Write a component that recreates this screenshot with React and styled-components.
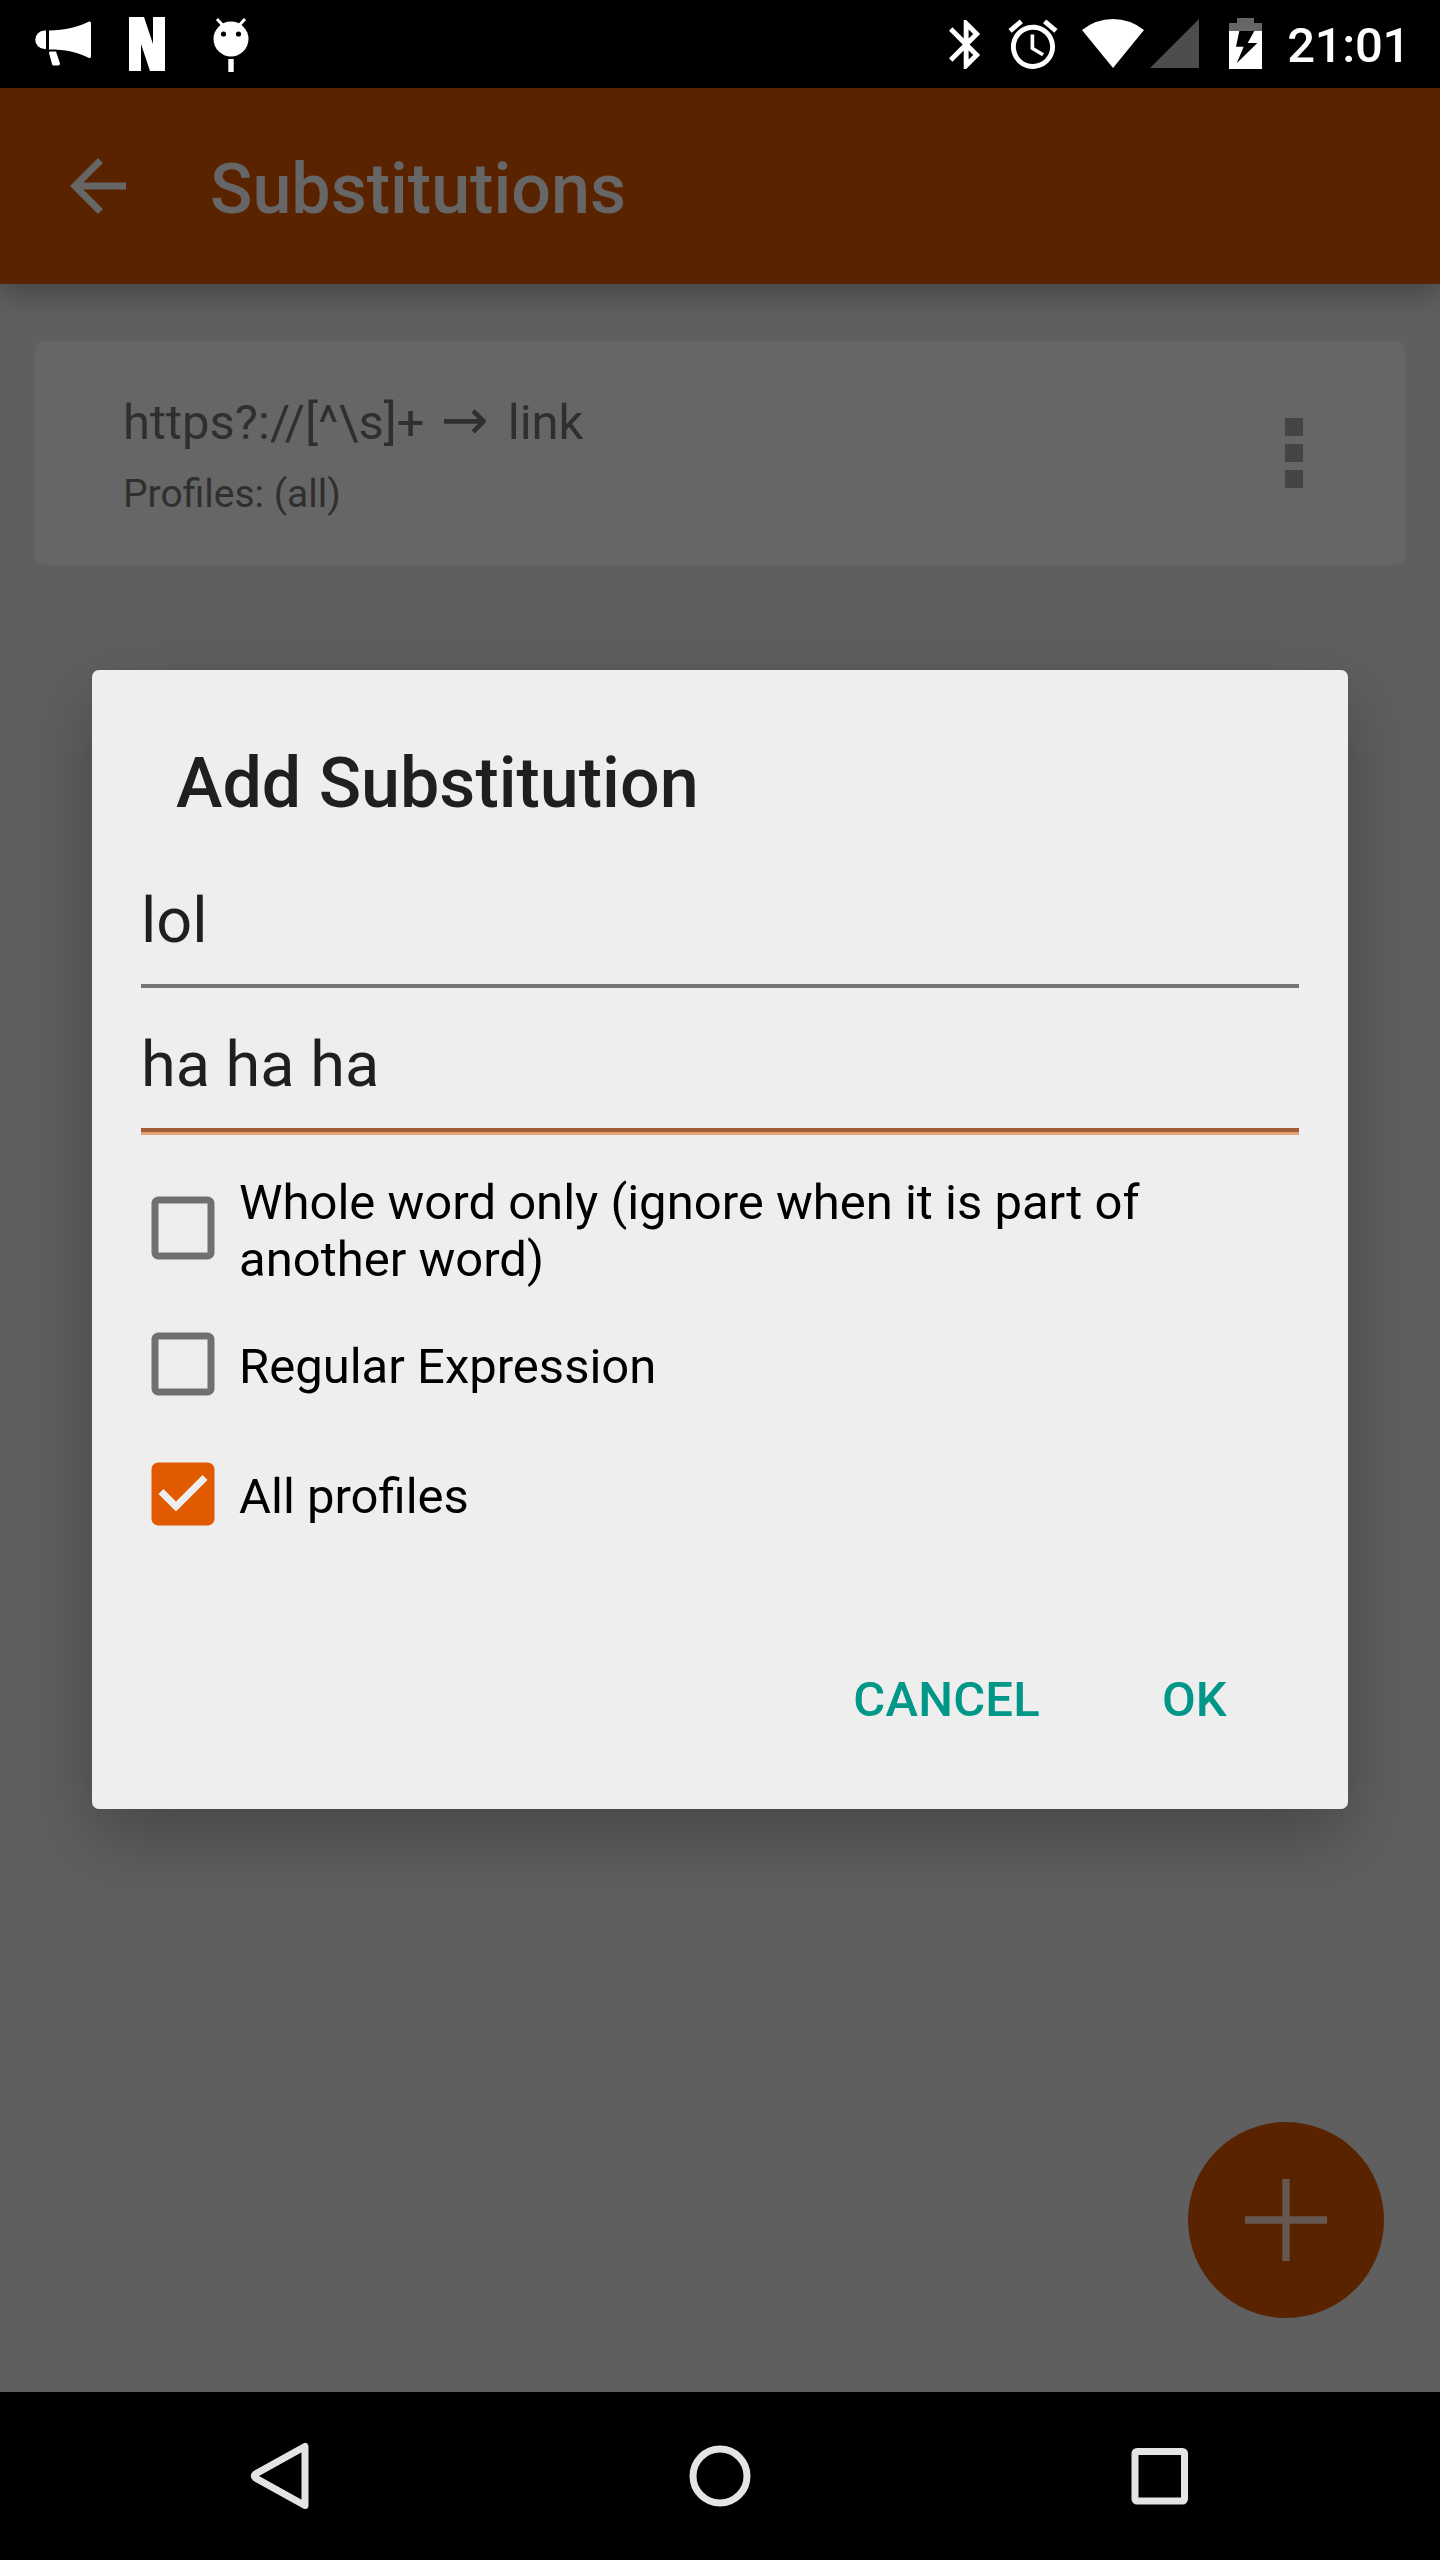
import React from "react";
import styled, { createGlobalStyle } from "styled-components";

const GlobalStyle = createGlobalStyle`
  * { box-sizing: border-box; }
  html, body { margin: 0; padding: 0; background: #000; }
  body { font-family: Roboto, "Noto Sans", "Liberation Sans", sans-serif; }
  svg { display: block; flex: none; }
`;

const Screen = styled.div`
  position: relative;
  display: flex;
  flex-direction: column;
  width: 1440px;
  height: 2560px;
  overflow: hidden;
  background: #5f5f5f;
`;

const StatusBar = styled.header`
  display: flex;
  justify-content: space-between;
  height: 88px;
  flex: none;
  padding: 0 30px 0 35px;
  background: #000;
  color: #fff;
`;

const StatusGroup = styled.div`
  display: flex;
  align-items: center;
`;

const StatusIcon = styled.svg.attrs((p) => ({
  width: p.$w,
  height: 88,
  viewBox: `0 0 ${p.$w} 88`,
}))`
  margin-right: ${(p) => p.$gap || 0}px;
  fill: #fff;
`;

const Clock = styled.span`
  font-size: 49px;
  font-weight: 500;
  line-height: 58px;
  letter-spacing: -0.3px;
  padding-top: 4px;
`;

const Toolbar = styled.div`
  display: flex;
  align-items: center;
  height: 196px;
  flex: none;
  padding-left: 56px;
  background: #5a2300;
  color: #666;
  box-shadow: 0 8px 28px rgba(0, 0, 0, 0.3);
`;

const ToolbarTitle = styled.h1`
  margin: 6px 0 0 70px;
  font-size: 70px;
  font-weight: 500;
  line-height: 82px;
`;

const Content = styled.main`
  flex: 1;
  padding: 57px 35px;
`;

const Card = styled.section`
  display: flex;
  justify-content: space-between;
  height: 224px;
  padding: 53px 102.5px 0 88px;
  border-radius: 10px;
  background: #666;
  color: #2f2f2f;
`;

const CardText = styled.div`
  display: flex;
  flex-direction: column;
  gap: 19px;
`;

const Rule = styled.div`
  height: 58px;
  font-size: 49px;
  line-height: 58px;
  white-space: pre;
`;

const Arrow = styled.span`
  margin: 0 7px 0 4px;
  font-family: "Noto Sans", "DejaVu Sans", sans-serif;
  font-size: 57px;
  line-height: 0;
`;

const Profiles = styled.div`
  font-size: 39px;
  line-height: 46px;
`;

const MenuDots = styled.div`
  display: flex;
  flex-direction: column;
  gap: 8px;
  padding-top: 24px;
`;

const Dot = styled.i`
  width: 18px;
  height: 18px;
  background: #444;
`;

const Fab = styled.button`
  position: absolute;
  right: 56px;
  bottom: 242px;
  display: flex;
  align-items: center;
  justify-content: center;
  width: 196px;
  height: 196px;
  padding: 0;
  border: 0;
  border-radius: 50%;
  background: #5a2300;
`;

const NavBar = styled.nav`
  display: flex;
  align-items: center;
  justify-content: space-between;
  height: 168px;
  flex: none;
  padding: 0 248px;
  background: #000;
`;

const Dialog = styled.div`
  position: absolute;
  left: 92px;
  top: 670px;
  display: flex;
  flex-direction: column;
  width: 1256px;
  height: 1139px;
  padding: 72px 49px 0;
  border-radius: 7px;
  background: #eee;
  color: #1f1f1f;
  box-shadow: 0 28px 70px rgba(0, 0, 0, 0.26);
`;

const DialogTitle = styled.h2`
  margin: 0 0 59px 35px;
  font-size: 70px;
  font-weight: 500;
  line-height: 82px;
`;

const Field = styled.div`
  height: 105px;
  margin-bottom: ${(p) => (p.$focused ? 42 : 39)}px;
  font-size: 63px;
  line-height: 75px;
  border-bottom: 4px solid ${(p) => (p.$focused ? "#a15d36" : "#747474")};
  box-shadow: ${(p) => (p.$focused ? "0 3px 0 #e5a27a" : "none")};
`;

const Option = styled.label`
  display: flex;
  align-items: center;
  gap: 14px;
  height: ${(p) => p.$h}px;
  margin-bottom: ${(p) => p.$mb || 0}px;
  color: #000;
  font-size: 49px;
  line-height: 57px;
  white-space: pre-line;
`;

const CheckSvg = styled.svg`
  margin-bottom: ${(p) => p.$lift}px;
  fill: ${(p) => (p.$on ? "#e25a00" : "#707070")};
`;

const Actions = styled.div`
  display: flex;
  justify-content: flex-end;
  gap: 122px;
  margin-top: 110px;
  padding-right: 72px;
`;

const Action = styled.button`
  padding: 0;
  border: 0;
  background: none;
  color: #009688;
  font-family: inherit;
  font-size: 49px;
  font-weight: 500;
  line-height: 58px;
  letter-spacing: 0.2px;
`;

function Checkbox({ on, lift = 4 }) {
  return (
    <CheckSvg $on={on} $lift={lift} width="84" height="84" viewBox="0 0 24 24">
      {on ? (
        <path d="M19 3H5c-1.11 0-2 .9-2 2v14c0 1.1.89 2 2 2h14c1.11 0 2-.9 2-2V5c0-1.1-.89-2-2-2zm-9 14l-5-5 1.41-1.41L10 14.17l7.59-7.59L19 8l-9 9z" />
      ) : (
        <path d="M19 5v14H5V5h14m0-2H5c-1.1 0-2 .9-2 2v14c0 1.1.9 2 2 2h14c1.1 0 2-.9 2-2V5c0-1.1-.9-2-2-2z" />
      )}
    </CheckSvg>
  );
}

function NotificationIcons() {
  return (
    <StatusGroup>
      <StatusIcon $w={56} $gap={38}>
        <path d="M11 30.5V49H9.500A9.250 9.250 0 0 1 9.500 30.500zM14 30.500C30 30.500 43 27 54 21.500Q56 21 56 23V56.500Q56 58.500 54 58C43 52 30 49.500 14 49.500zM14.500 51.500H21L25 63.500Q25 65.500 23 65.500H18.500Q17.500 65.500 17 64L14 53z" />
      </StatusIcon>
      <StatusIcon $w={36} $gap={48}>
        <path d="M0 17H15L24 44V17H36V71H21L12 44V71H0z" />
      </StatusIcon>
      <StatusIcon $w={36}>
        <circle cx="18" cy="39" r="17.500" />
        <path d="M4 19L10 25.500M32 19L26 25.500" stroke="#fff" strokeWidth="3" />
        <circle cx="10.500" cy="34" r="2.600" fill="#000" />
        <circle cx="25.500" cy="34" r="2.600" fill="#000" />
        <rect x="15.300" y="59" width="5.400" height="13" />
      </StatusIcon>
    </StatusGroup>
  );
}

function SystemIcons() {
  return (
    <StatusGroup>
      <StatusIcon $w={32} $gap={27}>
        <path
          transform="translate(-12.250 15.100) scale(2.450)"
          d="M17.710 7.710L12 2h-1v7.590L6.410 5 5 6.410 10.590 12 5 17.590 6.410 19 11 14.410V22h1l5.710-5.710-4.300-4.290 4.300-4.290zM13 5.830l1.880 1.880L13 9.590V5.830zm1.880 10.460L13 18.170v-3.760l1.880 1.880z"
        />
      </StatusIcon>
      <StatusIcon $w={50} $gap={24}>
        <path
          transform="translate(-4.400 15) scale(2.450)"
          d="M22 5.720l-4.600-3.860-1.290 1.530 4.600 3.860L22 5.720zM7.880 3.390L6.600 1.860 2 5.710l1.290 1.530 4.590-3.850zM12.500 8H11v6l4.750 2.850.750-1.230-4-2.370V8zM12 4c-4.970 0-9 4.030-9 9s4.020 9 9 9c4.970 0 9-4.030 9-9s-4.030-9-9-9zm0 16c-3.870 0-7-3.130-7-7s3.130-7 7-7 7 3.130 7 7-3.130 7-7 7z"
        />
      </StatusIcon>
      <StatusIcon $w={62} $gap={6}>
        <path d="M0 30Q14 19 31 19T62 30L31 68z" />
      </StatusIcon>
      <StatusIcon $w={49} $gap={30}>
        <path d="M0 68H49V19z" fill="#4d4d4d" />
      </StatusIcon>
      <StatusIcon $w={33} $gap={25.5}>
        <path d="M8 18H25V23H33V31H0V23H8z" fill="#666" />
        <path d="M0 31H33V69H0z" />
        <path d="M10.300 31H25.300L18.700 43H28.300L7.700 63.300L14.700 46.700H7z" fill="#000" />
      </StatusIcon>
      <Clock>21:01</Clock>
    </StatusGroup>
  );
}

export default function App() {
  return (
    <Screen>
      <GlobalStyle />
      <StatusBar>
        <NotificationIcons />
        <SystemIcons />
      </StatusBar>
      <Toolbar>
        <svg width="84" height="84" viewBox="0 0 24 24" fill="#666">
          <path d="M20 11H7.830l5.590-5.590L12 4l-8 8 8 8 1.410-1.410L7.830 13H20v-2z" />
        </svg>
        <ToolbarTitle>Substitutions</ToolbarTitle>
      </Toolbar>
      <Content>
        <Card>
          <CardText>
            <Rule>
              {"https?://[^\\s]+ "}
              <Arrow>→</Arrow>
              {" link"}
            </Rule>
            <Profiles>Profiles: (all)</Profiles>
          </CardText>
          <MenuDots>
            <Dot />
            <Dot />
            <Dot />
          </MenuDots>
        </Card>
      </Content>
      <Fab aria-label="Add">
        <svg width="82" height="82" viewBox="0 0 82 82" fill="#665850">
          <path d="M37.300 0H44.700V37.300H82V44.700H44.700V82H37.300V44.700H0V37.300H37.300z" />
        </svg>
      </Fab>
      <NavBar>
        <svg width="62" height="70" viewBox="0 0 62 70">
          <path d="M57 5.500V64.500L7.500 37Q5.500 35 7.500 33z" fill="none" stroke="#e4e4e4" strokeWidth="7" strokeLinejoin="round" />
        </svg>
        <svg width="62" height="62" viewBox="0 0 62 62">
          <circle cx="31" cy="31" r="27" fill="none" stroke="#e4e4e4" strokeWidth="7" />
        </svg>
        <svg width="62" height="62" viewBox="0 0 62 62">
          <rect x="5" y="6.500" width="49.500" height="49.500" rx="2" fill="none" stroke="#e4e4e4" strokeWidth="7" />
        </svg>
      </NavBar>
      <Dialog role="dialog">
        <DialogTitle>Add Substitution</DialogTitle>
        <Field>lol</Field>
        <Field $focused>ha ha ha</Field>
        <Option $h={114} $mb={13}>
          <Checkbox lift={6} />
          <span>{"Whole word only (ignore when it is part of\nanother word)"}</span>
        </Option>
        <Option $h={130}>
          <Checkbox />
          <span>Regular Expression</span>
        </Option>
        <Option $h={130}>
          <Checkbox on />
          <span>All profiles</span>
        </Option>
        <Actions>
          <Action>CANCEL</Action>
          <Action>OK</Action>
        </Actions>
      </Dialog>
    </Screen>
  );
}
